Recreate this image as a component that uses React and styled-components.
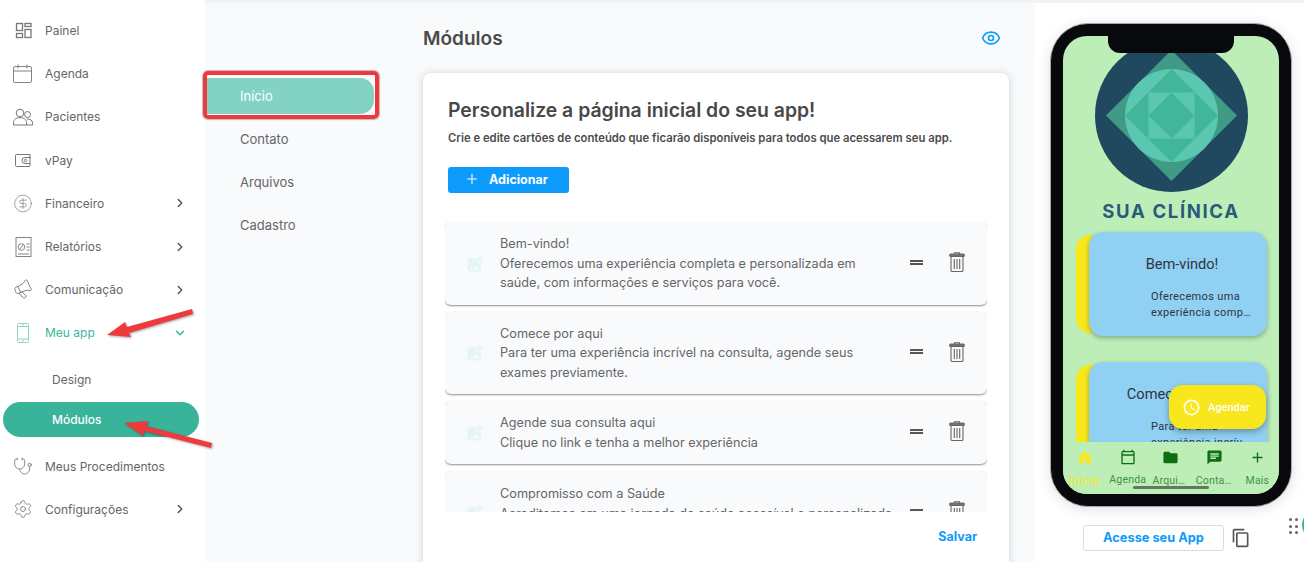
import React from 'react';
import styled, { createGlobalStyle } from 'styled-components';
import { ChevronRight, ChevronDown, CircleDollarSign, Megaphone, Stethoscope, Settings, Plus, Eye } from 'lucide-react';
import { MdHome, MdOutlineCalendarToday, MdFolder, MdChat, MdAdd, MdOutlineAccessTime, MdAddPhotoAlternate, MdOutlineContentCopy } from 'react-icons/md';

const Global = createGlobalStyle`
  html, body { margin: 0; padding: 0; background: #fff; }
  * { box-sizing: border-box; }
  body { font-family: Inter, "Liberation Sans", sans-serif; }
`;

const Page = styled.div`
  position: relative;
  display: flex;
  width: 1304px;
  height: 562px;
  overflow: hidden;
  background: #f9fafc;
`;
const Sidebar = styled.nav`
  width: 205px;
  flex: none;
  background: #fff;
  padding-top: 9px;
  display: flex;
  flex-direction: column;
`;
const NavRow = styled.div`
  height: 43.2px;
  flex: none;
  display: flex;
  align-items: center;
  padding-left: 13px;
  font-size: 12px;
  color: ${p => (p.$active ? '#3ab49a' : '#666')};
`;
const NavIcon = styled.span`
  width: 20px;
  height: 20px;
  margin-right: 12px;
  flex: none;
  display: flex;
  align-items: center;
  justify-content: center;
  color: ${p => (p.$active ? '#8ed5c5' : '#777')};
`;
const NavLabel = styled.span`
  flex: 1;
`;
const Chevron = styled.span`
  width: 14px;
  height: 14px;
  margin-right: 18px;
  display: flex;
  color: ${p => (p.$active ? '#3ab49a' : '#555')};
`;
const SubItem = styled.div`
  height: ${p => p.$h}px;
  flex: none;
  margin: ${p => p.$m || '0'};
  display: flex;
  align-items: center;
  padding-left: ${p => (p.$active ? 49 : 52)}px;
  font-size: 12px;
  font-weight: ${p => (p.$active ? 500 : 400)};
  border-radius: 18px;
  color: ${p => (p.$active ? '#fff' : '#666')};
  background: ${p => (p.$active ? '#39b39a' : 'transparent')};
`;

const Content = styled.div`
  flex: 1;
  display: flex;
  border-top: 3px solid #f1f2f3;
  min-width: 0;
`;
const SubNav = styled.div`
  width: 218px;
  flex: none;
  padding-top: 71px;
  display: flex;
  flex-direction: column;
`;
const SubNavItem = styled.div`
  position: relative;
  width: 173px;
  height: 43px;
  flex: none;
  display: flex;
  align-items: center;
  padding-left: 35px;
  font-size: 13px;
  color: ${p => (p.$active ? '#fff' : '#666')};
  ${p => p.$active && `
    height: 36px;
    width: 167px;
    margin: 4px 0 3px 2px;
    padding-left: 33px;
    background: #82d3c4;
    border-radius: 0 14px 14px 0;
  `}
`;
const RedBox = styled.div`
  position: absolute;
  left: -4px;
  top: -7px;
  width: 176px;
  height: 48px;
  border: 4px solid #ee3a3d;
  border-radius: 5px;
  box-shadow: 0 0 1px 1px rgba(70, 70, 70, 0.35);
`;
const Main = styled.main`
  width: 586px;
  flex: none;
  display: flex;
  flex-direction: column;
`;
const MainHead = styled.header`
  height: 70px;
  flex: none;
  display: flex;
  align-items: center;
  justify-content: space-between;
  padding: 0 8px 0 0;
  & > h1 {
    margin: 0;
    font-size: 19px;
    font-weight: 600;
    color: #4a4a4a;
  }
  & > svg { color: #0d9bfd; }
`;
const Card = styled.section`
  flex: 1;
  min-height: 0;
  display: flex;
  flex-direction: column;
  background: #fff;
  border-radius: 8px 8px 0 0;
  box-shadow: 0 1px 8px rgba(40, 50, 60, 0.22);
  padding: 25px 22px 0 22px;
`;
const CardTitle = styled.h2`
  margin: 0 0 0 3px;
  font-size: 19.4px;
  line-height: 24px;
  font-weight: 600;
  color: #484848;
`;
const CardSub = styled.p`
  margin: 9px 0 0 3px;
  font-size: 11.3px;
  line-height: 14px;
  font-weight: 600;
  color: #4c4c4c;
`;
const AddButton = styled.button`
  width: 121px;
  height: 26px;
  margin: 22px 0 0 3px;
  border: 0;
  border-radius: 3px;
  background: #0d9bfd;
  color: #fff;
  font: 700 12.5px Inter, sans-serif;
  display: flex;
  align-items: center;
  justify-content: center;
  gap: 9px;
  padding: 0 5px 2px 0;
`;
const List = styled.div`
  margin-top: 29px;
  height: 290px;
  flex: none;
  overflow: hidden;
  display: flex;
  flex-direction: column;
  gap: 7px;
  padding-bottom: 4px;
`;
const Item = styled.article`
  flex: none;
  height: ${p => p.$h}px;
  display: flex;
  align-items: ${p => (p.$clip ? 'flex-start' : 'center')};
  background: #f9fafc;
  border-radius: 6px;
  box-shadow: 0 1px 2px rgba(0, 0, 0, 0.45);
  padding: ${p => (p.$clip ? '13px' : '0')} 0 0 20px;
`;
const ItemIcon = styled.span`
  width: 20px;
  display: flex;
  margin: ${p => (p.$clip ? '19px' : '0')} 15px 0 0;
  color: #e3f6f1;
`;
const ItemText = styled.div`
  flex: none;
  width: ${p => (p.$clip ? 400 : 375)}px;
  font-size: 12.7px;
  line-height: 19.5px;
  color: #666;
`;
const ItemTools = styled.div`
  display: flex;
  align-items: center;
  margin: ${p => (p.$clip ? '17px 0 0 10px' : '-3px 0 0 35px')};
`;
const Equals = styled.span`
  width: 13px;
  height: 5px;
  margin-right: 26px;
  border-top: 2px solid #555;
  border-bottom: 2px solid #555;
`;
const Footer = styled.footer`
  flex: 1;
  display: flex;
  justify-content: flex-end;
  padding: 17px 10px 0 0;
  font-size: 12.5px;
  font-weight: 700;
  color: #0d9bfd;
`;

const Side = styled.aside`
  position: relative;
  flex: none;
  margin-left: 26px;
  width: 269px;
  background: #fff;
  padding: 20px 0 0 15px;
`;
const PhoneFrame = styled.div`
  width: 242px;
  height: 484px;
  border-radius: 38px;
  background: #08090d;
  border: 1px solid #a8a9ad;
  padding: 12px;
  box-shadow: 0 2px 14px rgba(0, 0, 0, 0.12);
`;
const Screen = styled.div`
  position: relative;
  height: 100%;
  border-radius: 24px;
  overflow: hidden;
  background: #bdeeb8;
  display: flex;
  flex-direction: column;
`;
const Notch = styled.div`
  position: absolute;
  left: 45px;
  top: 0;
  width: 126px;
  height: 17px;
  background: #08090d;
  border-radius: 0 0 12px 12px;
  z-index: 3;
`;
const Scroll = styled.div`
  flex: 1;
  min-height: 0;
  overflow: hidden;
  padding-top: 3px;
  display: flex;
  flex-direction: column;
  align-items: center;
`;
const Brand = styled.div`
  margin-top: 8px;
  font: 700 18.5px Inter, sans-serif;
  letter-spacing: 1.65px;
  line-height: 22px;
  color: #2a5b7a;
`;
const AppCard = styled.div`
  position: relative;
  flex: none;
  width: 191px;
  height: ${p => p.$h}px;
  margin: ${p => p.$top}px 0 0 13px;
  align-self: flex-start;
  background: #f7e71c;
  border-radius: 14px;
`;
const AppCardBody = styled.div`
  position: absolute;
  left: 13px;
  top: -3px;
  width: 178px;
  height: 104px;
  border-radius: 14px;
  background: #90d0f2;
  box-shadow: 0 2px 5px rgba(0, 0, 0, 0.3);
  padding-top: 22px;
  font-family: Roboto, sans-serif;
  color: #2c3540;
`;
const AppCardTitle = styled.div`
  text-align: center;
  padding-left: 8px;
  font-size: 14.6px;
  line-height: 21px;
`;
const AppCardText = styled.div`
  margin: 14px 0 0 62px;
  width: 102px;
  font-size: 11px;
  line-height: 16px;
  letter-spacing: 0.35px;
`;
const AppCardLine = styled.div`
  white-space: nowrap;
  overflow: hidden;
  text-overflow: ellipsis;
`;
const BottomNav = styled.div`
  flex: none;
  position: relative;
  height: 52px;
  display: grid;
  grid-template-columns: repeat(5, 1fr);
  background: #bdeeb8;
`;
const Tab = styled.div`
  min-width: 0;
  display: flex;
  flex-direction: column;
  align-items: center;
  padding-top: 7px;
  color: ${p => (p.$active ? '#f7e71c' : '#0f6d12')};
`;
const TabLabel = styled.span`
  margin-top: ${p => (p.$active ? 7 : 8)}px;
  max-width: 37px;
  font: ${p => (p.$active ? 12.5 : 10.5)}px Roboto, sans-serif;
  line-height: 14px;
  letter-spacing: 0.2px;
  white-space: nowrap;
  overflow: hidden;
  text-overflow: ellipsis;
  color: ${p => (p.$active ? '#f7e71c' : '#3f9142')};
`;
const HomeBar = styled.div`
  position: absolute;
  left: 70px;
  bottom: 5px;
  width: 76px;
  height: 3px;
  border-radius: 2px;
  background: #66775f;
`;
const Fab = styled.div`
  position: absolute;
  left: 106px;
  top: 349px;
  width: 97px;
  height: 44px;
  border-radius: 14px;
  background: #f7e71c;
  box-shadow: 0 3px 6px rgba(0, 0, 0, 0.3);
  display: flex;
  align-items: center;
  padding-left: 13px;
  gap: 7px;
  font: 500 11px Roboto, sans-serif;
  color: #fff;
`;
const AccessRow = styled.div`
  display: flex;
  align-items: center;
  margin: 18px 0 0 33px;
  gap: 7px;
  color: #555;
`;
const AccessButton = styled.div`
  width: 141px;
  height: 26px;
  border: 1px solid #ddd;
  border-radius: 3px;
  display: flex;
  align-items: center;
  justify-content: center;
  padding-bottom: 2px;
  font-size: 12.8px;
  font-weight: 700;
  color: #0d9bfd;
`;
const Handle = styled.div`
  position: absolute;
  right: 6px;
  top: 518px;
  display: grid;
  grid-template-columns: 3px 3px;
  gap: 3.5px;
  & > i { display: block; width: 3px; height: 3px; border-radius: 50%; background: #666; }
`;
const HandleDisc = styled.div`
  position: absolute;
  left: 1302px;
  top: 510px;
  width: 30px;
  height: 30px;
  border-radius: 50%;
  background: #39b39a;
`;
const Arrow = styled.svg`
  position: absolute;
  left: 0;
  top: 0;
  pointer-events: none;
  filter: drop-shadow(1px 1px 1px rgba(0, 0, 0, 0.35));
`;

const PanelIcon = () => (
  <svg width="17" height="17" viewBox="0 0 17 17" fill="none" stroke="currentColor" strokeWidth="1.3">
    <rect x="1.5" y="1.5" width="6" height="7" /><rect x="10" y="1.5" width="6" height="3" />
    <rect x="1.5" y="11.5" width="6" height="4" /><rect x="10" y="7.5" width="6" height="8" />
  </svg>
);
const CalIcon = () => (
  <svg width="20" height="20" viewBox="0 0 20 20" fill="none" stroke="currentColor" strokeWidth="0.9">
    <rect x="0.5" y="2.5" width="18" height="16" rx="1.5" /><path d="M0.5 7h18M5 0.5v4M14 0.5v4" />
  </svg>
);
const PeopleIcon = () => (
  <svg width="20" height="18" viewBox="0 0 20 18" fill="none" stroke="currentColor" strokeWidth="1">
    <circle cx="7" cy="5" r="3.8" /><circle cx="14.5" cy="6.5" r="3" />
    <path d="M0.5 17v-2.5c0-3 2.5-4.8 6.5-4.8s6.5 1.8 6.5 4.8V17z" />
    <path d="M13.8 11c3 0 5.7 1 5.7 3.6V17h-6" />
  </svg>
);
const WalletIcon = () => (
  <svg width="18" height="15" viewBox="0 0 18 15" fill="none" stroke="currentColor" strokeWidth="1">
    <path d="M16 1.5H2.5a1 1 0 0 0-1 1v10a1 1 0 0 0 1 1H15a1 1 0 0 0 1-1v-11z" />
    <path d="M17 4.5h-6a3 3 0 0 0 0 6h5" /><circle cx="11.5" cy="7.5" r="1.2" />
  </svg>
);
const ReportIcon = () => (
  <svg width="17" height="20" viewBox="0 0 17 20" fill="none" stroke="currentColor" strokeWidth="0.9">
    <rect x="1" y="0.5" width="15" height="19" />
    <circle cx="6.5" cy="10" r="3.3" /><path d="M4.5 12.5l4-5M11.5 7h3M11.5 10h3M11.5 13h3M3 17h11" />
  </svg>
);
const PhoneIcon = () => (
  <svg width="12" height="20" viewBox="0 0 12 20" fill="none" stroke="currentColor" strokeWidth="1">
    <rect x="0.5" y="0.5" width="11" height="19" rx="1" /><path d="M0.5 3.5h11M0.5 16h11M5 1.9h2M5 17.8h2" />
  </svg>
);
const TrashIcon = () => (
  <svg width="16" height="20" viewBox="0 0 16 20" fill="none" stroke="#666" strokeWidth="1.1">
    <path d="M5.5 2V.8h5V2" /><rect x="0.7" y="2" width="14.6" height="2.4" rx="1" fill="#777" />
    <path d="M2 4.5v13.7a1.3 1.3 0 0 0 1.3 1.3h9.4a1.3 1.3 0 0 0 1.3-1.3V4.5" />
    <path d="M5.3 7v10M8 7v10M10.7 7v10" />
  </svg>
);
const Logo = () => (
  <svg width="153" height="153" viewBox="0 0 153 153" style={{ flex: 'none' }}>
    <circle cx="76.5" cy="76.5" r="76.5" fill="#20485f" />
    <polygon points="76.5,11 142,76.5 76.5,142 11,76.5" fill="#3f9b85" />
    <circle cx="76.5" cy="76.5" r="46.5" fill="#5cc7b1" />
    <polygon points="76.5,30 123,76.5 76.5,123 30,76.5" fill="#42b698" />
    <rect x="53.5" y="53.5" width="46" height="46" fill="#5cc7b1" />
    <polygon points="76.5,53.5 99.5,76.5 76.5,99.5 53.5,76.5" fill="#42b698" />
  </svg>
);

const items = [
  { h: 83, t: 'Bem-vindo!', d: 'Oferecemos uma experiência completa e personalizada em saúde, com informações e serviços para você.' },
  { h: 82, t: 'Comece por aqui', d: 'Para ter uma experiência incrível na consulta, agende seus exames previamente.' },
  { h: 63, t: 'Agende sua consulta aqui', d: 'Clique no link e tenha a melhor experiência' },
  { h: 83, clip: true, t: 'Compromisso com a Saúde', d: 'Acreditamos em uma jornada de saúde acessível e personalizada para cada paciente.' },
];

const More = () => <Chevron><ChevronRight size={14} strokeWidth={2.5} /></Chevron>;

export default function App() {
  return (
    <Page>
      <Global />
      <Sidebar>
        <NavRow><NavIcon><PanelIcon /></NavIcon><NavLabel>Painel</NavLabel></NavRow>
        <NavRow><NavIcon><CalIcon /></NavIcon><NavLabel>Agenda</NavLabel></NavRow>
        <NavRow><NavIcon><PeopleIcon /></NavIcon><NavLabel>Pacientes</NavLabel></NavRow>
        <NavRow><NavIcon><WalletIcon /></NavIcon><NavLabel>vPay</NavLabel></NavRow>
        <NavRow><NavIcon><CircleDollarSign size={23} strokeWidth={0.8} /></NavIcon><NavLabel>Financeiro</NavLabel><More /></NavRow>
        <NavRow><NavIcon><ReportIcon /></NavIcon><NavLabel>Relatórios</NavLabel><More /></NavRow>
        <NavRow><NavIcon><Megaphone size={21} strokeWidth={1} style={{ transform: 'rotate(-25deg)' }} /></NavIcon><NavLabel>Comunicação</NavLabel><More /></NavRow>
        <NavRow $active><NavIcon $active><PhoneIcon /></NavIcon><NavLabel>Meu app</NavLabel><Chevron $active><ChevronDown size={14} strokeWidth={2.5} /></Chevron></NavRow>
        <SubItem $h={42} $m="4px 0 0">Design</SubItem>
        <SubItem $h={35} $active $m="1px 6px 0 3px">Módulos</SubItem>
        <NavRow style={{ marginTop: 8 }}><NavIcon><Stethoscope size={21} strokeWidth={1} /></NavIcon><NavLabel>Meus Procedimentos</NavLabel></NavRow>
        <NavRow><NavIcon><Settings size={22} strokeWidth={1} /></NavIcon><NavLabel>Configurações</NavLabel><More /></NavRow>
      </Sidebar>
      <Content>
        <SubNav>
          <SubNavItem $active>Início<RedBox /></SubNavItem>
          <SubNavItem>Contato</SubNavItem>
          <SubNavItem>Arquivos</SubNavItem>
          <SubNavItem>Cadastro</SubNavItem>
        </SubNav>
        <Main>
          <MainHead>
            <h1>Módulos</h1>
            <Eye size={20} strokeWidth={2} />
          </MainHead>
          <Card>
            <CardTitle>Personalize a página inicial do seu app!</CardTitle>
            <CardSub>Crie e edite cartões de conteúdo que ficarão disponíveis para todos que acessarem seu app.</CardSub>
            <AddButton><Plus size={16} strokeWidth={1.6} />Adicionar</AddButton>
            <List>
              {items.map(i => (
                <Item key={i.t} $h={i.h} $clip={i.clip}>
                  <ItemIcon $clip={i.clip}><MdAddPhotoAlternate size={20} /></ItemIcon>
                  <ItemText $clip={i.clip}>
                    <div>{i.t}</div>
                    <div>{i.d}</div>
                  </ItemText>
                  <ItemTools $clip={i.clip}><Equals /><TrashIcon /></ItemTools>
                </Item>
              ))}
            </List>
            <Footer>Salvar</Footer>
          </Card>
        </Main>
        <Side>
          <PhoneFrame>
            <Screen>
              <Notch />
              <Scroll>
                <Logo />
                <Brand>SUA CLÍNICA</Brand>
                <AppCard $h={98} $top={13}>
                  <AppCardBody>
                    <AppCardTitle>Bem-vindo!</AppCardTitle>
                    <AppCardText>
                      <AppCardLine>Oferecemos uma</AppCardLine>
                      <AppCardLine>experiência completa e personalizada</AppCardLine>
                    </AppCardText>
                  </AppCardBody>
                </AppCard>
                <AppCard $h={98} $top={32}>
                  <AppCardBody>
                    <AppCardTitle>Comece por aqui</AppCardTitle>
                    <AppCardText>
                      <AppCardLine>Para ter uma</AppCardLine>
                      <AppCardLine>experiência incrível na consulta</AppCardLine>
                    </AppCardText>
                  </AppCardBody>
                </AppCard>
              </Scroll>
              <BottomNav>
                <Tab $active><MdHome size={18} /><TabLabel $active>Início</TabLabel></Tab>
                <Tab><MdOutlineCalendarToday size={16} /><TabLabel>Agenda</TabLabel></Tab>
                <Tab><MdFolder size={17} /><TabLabel>Arquivos</TabLabel></Tab>
                <Tab><MdChat size={17} /><TabLabel>Contato</TabLabel></Tab>
                <Tab><MdAdd size={17} /><TabLabel>Mais</TabLabel></Tab>
                <HomeBar />
              </BottomNav>
              <Fab><MdOutlineAccessTime size={19} />Agendar</Fab>
            </Screen>
          </PhoneFrame>
          <AccessRow>
            <AccessButton>Acesse seu App</AccessButton>
            <MdOutlineContentCopy size={20} />
          </AccessRow>
        </Side>
      </Content>
      <Handle><i /><i /><i /><i /><i /><i /></Handle>
      <HandleDisc />
      <Arrow width="1304" height="562" viewBox="0 0 1304 562">
        <polygon points="107,335 125,322 127,327 192,309 193,314 129,333 131,337" fill="#ee3a3d" />
        <polygon points="124,423 148,421 146,426 212,443 211,448 144,431 143,436" fill="#ee3a3d" />
      </Arrow>
    </Page>
  );
}
